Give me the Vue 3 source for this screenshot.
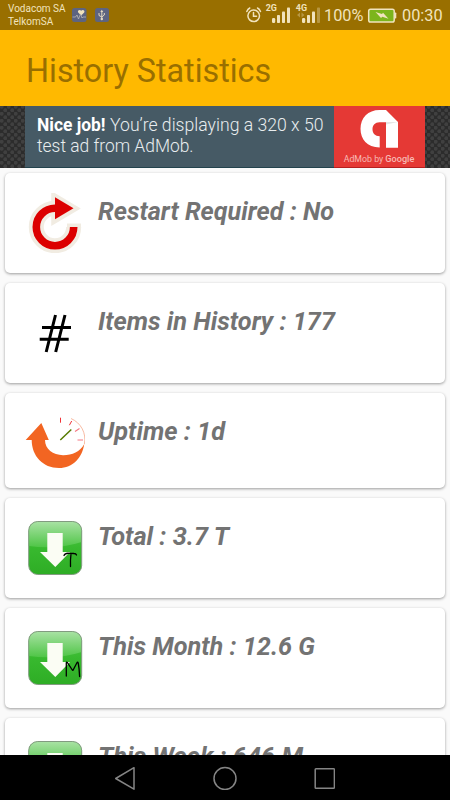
<script setup>
const rows = [
  { icon: 'restart', text: 'Restart Required : No', w: 236 },
  { icon: 'hash', text: 'Items in History : 177', w: 237 },
  { icon: 'uptime', text: 'Uptime : 1d', w: 127 },
  { icon: 'down', mark: 'T', text: 'Total : 3.7 T', w: 131 },
  { icon: 'down', mark: 'M', text: 'This Month : 12.6 G', w: 217 },
  { icon: 'down', mark: '', text: 'This Week : 646 M', w: 205 }
]
</script>

<template>
  <div class="screen">
    <div class="status">
      <div class="carriers"><span>Vodacom SA</span><span>TelkomSA</span></div>
      <svg class="badges" width="38" height="16" viewBox="72 7 38 16">
        <rect x="72" y="8" width="14.5" height="14" rx="2.5" fill="#5d6480" />
        <path d="M81.2 15.5l-3-3c-1.2-2 1.6-3.6 3-1.7 1.400-1.900 4.200-.3 3 1.700z" fill="#f1e3bd" />
        <path d="M72.500 17h3l1.500-2 1.500 4 2-5 1.500 4 1-1h3" fill="none" stroke="#b9b6b4" stroke-width=".8" />
        <rect x="95" y="8" width="14" height="14" rx="2.500" fill="#5d6480" />
        <path d="M101.800 19v-8M99 13v2.500l2.800 1.500 2.500-2v-2" fill="none" stroke="#e4dac4" stroke-width="1" />
        <path d="M100.300 12l1.500-2.200 1.500 2.200z" fill="#e4dac4" />
        <circle cx="101.800" cy="19" r="1.200" fill="#e4dac4" />
      </svg>
      <svg class="signals" width="76" height="24" viewBox="245 3 76 24">
        <g fill="none" stroke="#f1e3bd" stroke-width="1.500" stroke-linecap="round">
          <circle cx="253.700" cy="15.800" r="5.800" />
          <path d="M253.500 12.500v3.700h3M246.800 11.500q1-2.500 3-3.500M257.500 8q2 1 3 3.500" />
        </g>
        <g fill="#f1e3bd">
          <rect x="272" y="18" width="3.200" height="5" rx="1.200" />
          <rect x="277" y="15" width="3" height="8" rx=".8" />
          <rect x="282" y="11.500" width="3" height="11.500" rx=".8" />
          <rect x="287" y="7.500" width="3" height="15.500" rx=".8" />
          <rect x="302" y="18" width="3.200" height="5" rx="1.200" />
          <rect x="307" y="15" width="3" height="8" rx=".8" />
          <rect x="312" y="11.500" width="3" height="11.500" rx=".8" />
          <rect x="317" y="7.500" width="3" height="15.500" rx=".8" opacity=".35" />
          <path d="M297 15l3-2.500v5zM304.500 15l-3-2.500v5z" opacity=".35" />
          <text x="265.700" y="11.300" class="net" textLength="11.200" lengthAdjust="spacingAndGlyphs">2G</text>
          <text x="295.800" y="11.300" class="net" textLength="11.200" lengthAdjust="spacingAndGlyphs">4G</text>
        </g>
      </svg>
      <span class="percent">100%</span>
      <svg class="battery" width="30" height="16" viewBox="367 7 30 16">
        <rect x="368.700" y="9.200" width="25.500" height="12.800" rx="1.800" fill="#7cb51c" stroke="#f1e3bd" stroke-width="1.500" />
        <rect x="394.500" y="12.500" width="1.800" height="6" rx=".8" fill="#f1e3bd" />
        <path d="M375.500 12l6.500 2 1-1.200 5.500 6-6.200-2-1.300 1.300z" fill="#f1e3bd" />
      </svg>
      <span class="clock">00:30</span>
    </div>

    <header class="header"><h1>History Statistics</h1></header>

    <div class="ad">
      <svg width="450" height="62" viewBox="0 106 450 62">
        <defs>
          <pattern id="mesh" width="7" height="7" patternUnits="userSpaceOnUse">
            <rect width="7" height="7" fill="#2c2c2c" />
            <circle cx="1.750" cy="1.750" r="1.900" fill="#404040" />
            <circle cx="5.250" cy="5.250" r="1.900" fill="#404040" />
          </pattern>
        </defs>
        <rect y="106" width="450" height="62" fill="url(#mesh)" />
        <rect x="25" y="106" width="309" height="62" fill="#465a65" />
        <rect x="334" y="106" width="91" height="62" fill="#e53935" />
        <path d="M25 167.500h309" stroke="#23434d" />
        <path d="M334 167.500h91" stroke="#b5201f" />
        <g class="adtext">
          <text x="37" y="131.300" class="bold" textLength="68.500" lengthAdjust="spacingAndGlyphs">Nice job!</text>
          <text x="110" y="131.300" textLength="213.500" lengthAdjust="spacingAndGlyphs">You’re displaying a 320 x 50</text>
          <text x="37" y="152" textLength="156.500" lengthAdjust="spacingAndGlyphs">test ad from AdMob.</text>
        </g>
        <path d="M379.700 147.500C367 147.500 360.500 139 360.500 128.800C360.500 118 368 110 379.500 110h6.500l12 12v25.700h-12v-25.400h-6.500c-4.500 0-7 3-7 7s2.500 7 7.200 7z" fill="#fff" />
        <path d="M386 122h12l-12 2.500z" fill="#e6e6e6" />
        <g fill="#f8b9b4">
          <text x="343.700" y="161.500" class="brand" textLength="39.500" lengthAdjust="spacingAndGlyphs">AdMob by</text>
          <text x="385.300" y="161.500" class="brand google" textLength="29" lengthAdjust="spacingAndGlyphs">Google</text>
        </g>
      </svg>
    </div>

    <main class="list">
      <section v-for="row in rows" :key="row.text" class="card" :class="{ short: row.icon === 'uptime' }">
        <svg v-if="row.icon === 'restart'" class="icon" viewBox="25 193 60 60">
          <path d="M73.700 227A18.700 18.700 0 1 1 55 208.300" fill="none" stroke="#f1ece2" stroke-width="15" />
          <path d="M67 223.500h14v5H67z" fill="#f1ece2" />
          <path d="M55 197.500v22l18.500-11z" fill="#f1ece2" stroke="#f1ece2" stroke-width="7.500" />
          <path d="M73.700 227A18.700 18.700 0 1 1 55 208.300" fill="none" stroke="#dc0000" stroke-width="7.600" />
          <path d="M55 197.300v22l18.500-11z" fill="#dc0000" />
        </svg>
        <svg v-else-if="row.icon === 'hash'" class="icon" viewBox="25 303 60 60">
          <path d="M55.500 315l-9.300 37M65 315l-9.300 37M42 327.500h29M39.700 339.300h29" fill="none" stroke="#000" stroke-width="3" />
        </svg>
        <svg v-else-if="row.icon === 'uptime'" class="icon" viewBox="25 413 60 60">
          <path d="M41.300 423l7.500 17H45C45 449 53 455 63 455.200C72 455.300 80 452 84.300 444C82 458 73 468 59 468C43 468 31.700 456 31.700 440H25.700z" fill="#f26522" />
          <path d="M71 418.500C81 423 86.500 433 84.400 444" fill="none" stroke="#f5aa8c" stroke-width=".8" />
          <path d="M60.300 440l11-10.500" stroke="#567a00" stroke-width="1.500" />
          <path d="M60.500 417.700v5M71.700 421l-2.300 4.200" stroke="#f03238" stroke-width="1" />
          <path d="M79.500 428.500l-4.500 3M83 440h-5.500" stroke="#f57983" stroke-width="1.200" />
        </svg>
        <svg v-else class="icon" viewBox="25 518 60 60">
          <defs>
            <linearGradient id="body" x1="0" y1="0" x2="0" y2="1">
              <stop offset="0" stop-color="#54c94b" />
              <stop offset=".5" stop-color="#38b92f" />
              <stop offset="1" stop-color="#2ead25" />
            </linearGradient>
            <linearGradient id="gloss" x1="0" y1="0" x2="0" y2="1">
              <stop offset="0" stop-color="#a9e2a4" />
              <stop offset="1" stop-color="#4fc546" />
            </linearGradient>
          </defs>
          <rect x="28.700" y="521.500" width="53" height="53" rx="9" fill="url(#body)" />
          <path d="M28.700 546v-15.500a9 9 0 0 1 9-9h35a9 9 0 0 1 9 9V542Q57 550 28.700 546z" fill="url(#gloss)" />
          <rect x="28.700" y="521.500" width="53" height="53" rx="9" fill="none" stroke="#829b80" stroke-width="1" />
          <path d="M47.300 533h15.400v19h7.300l-14.700 15L40 552h7.300z" fill="#fbfdf4" />
          <path v-if="row.mark === 'T'" d="M64 555.500q1-2.500 5-2.200l5 .2q2 0 2.500 1.500M71 554q-.8 6-.5 12.500" class="ink" />
          <path v-if="row.mark === 'M'" d="M66.300 566v-13q0-1.500 1-.5l5 7.500q.5 1 1-.3l3.500-6.700q1-2 1.500.5 1 5 1.300 13" class="ink" />
        </svg>
        <svg class="label" :width="row.w + 4" height="36" overflow="visible">
          <text x="0" y="27" :textLength="row.w" lengthAdjust="spacingAndGlyphs">{{ row.text }}</text>
        </svg>
      </section>
    </main>

    <nav class="nav">
      <svg width="220" height="24" viewBox="115 765 220 24">
        <g fill="none" stroke="#858585" stroke-width="1.500" stroke-linejoin="round">
          <path d="M134 766.700v21.500l-18.300-10.700z" />
          <circle cx="225" cy="777.500" r="11" />
          <rect x="315.200" y="767.700" width="19.200" height="19.500" rx=".8" />
        </g>
      </svg>
    </nav>
  </div>
</template>

<style>
body { margin: 0; }
</style>

<style scoped>
.screen {
  width: 450px;
  height: 800px;
  display: flex;
  flex-direction: column;
  overflow: hidden;
  background: #fafafa;
  font-family: Roboto, "Liberation Sans", sans-serif;
}
.status {
  height: 30px;
  flex: none;
  display: flex;
  align-items: center;
  background: #996f00;
  color: #f1e3bd;
  white-space: nowrap;
}
.carriers {
  display: flex;
  flex-direction: column;
  width: 64px;
  padding-left: 8px;
  font-size: 10px;
  line-height: 13.5px;
}
.badges { flex: none; }
.signals { margin-left: 135px; flex: none; }
.net { font-size: 8.5px; font-weight: 700; }
.percent { width: 42px; margin-left: 3px; font-size: 16.300px; line-height: 20px; padding-top: 2px; }
.battery { margin-left: 1px; flex: none; }
.clock { margin-left: 5px; font-size: 16.300px; line-height: 20px; padding-top: 2px; }
.header {
  height: 76px;
  flex: none;
  display: flex;
  align-items: center;
  padding-left: 26px;
  background: #ffb900;
}
h1 {
  margin: 6px 0 0;
  font-size: 32.3px;
  font-weight: 400;
  line-height: 40px;
  color: #996f00;
}
.ad { height: 62px; flex: none; }
.ad svg { display: block; }
.adtext { font-size: 17.500px; font-weight: 300; fill: #e9edef; }
.bold { font-weight: 700; fill: #fff; }
.brand { font-size: 9.500px; }
.google { font-weight: 500; }
.list {
  flex: 1;
  min-height: 0;
  overflow: hidden;
  display: flex;
  flex-direction: column;
  gap: 10px;
  padding: 5px 5px 0;
}
.card {
  flex: none;
  height: 100px;
  box-sizing: border-box;
  display: flex;
  align-items: flex-start;
  gap: 13px;
  padding: 20px 20px 0;
  border-radius: 5px;
  background: #fff;
  box-shadow: 0 1px 3px rgba(0, 0, 0, .38);
}
.card.short { height: 95px; }
.icon { width: 60px; height: 60px; flex: none; }
.label { flex: none; font-size: 25px; font-style: italic; font-weight: 700; fill: #737373; }
.ink { fill: none; stroke: #000; stroke-width: 1.300; stroke-linecap: round; }
.nav {
  height: 45px;
  flex: none;
  display: flex;
  align-items: center;
  justify-content: center;
  background: #000;
}
</style>
